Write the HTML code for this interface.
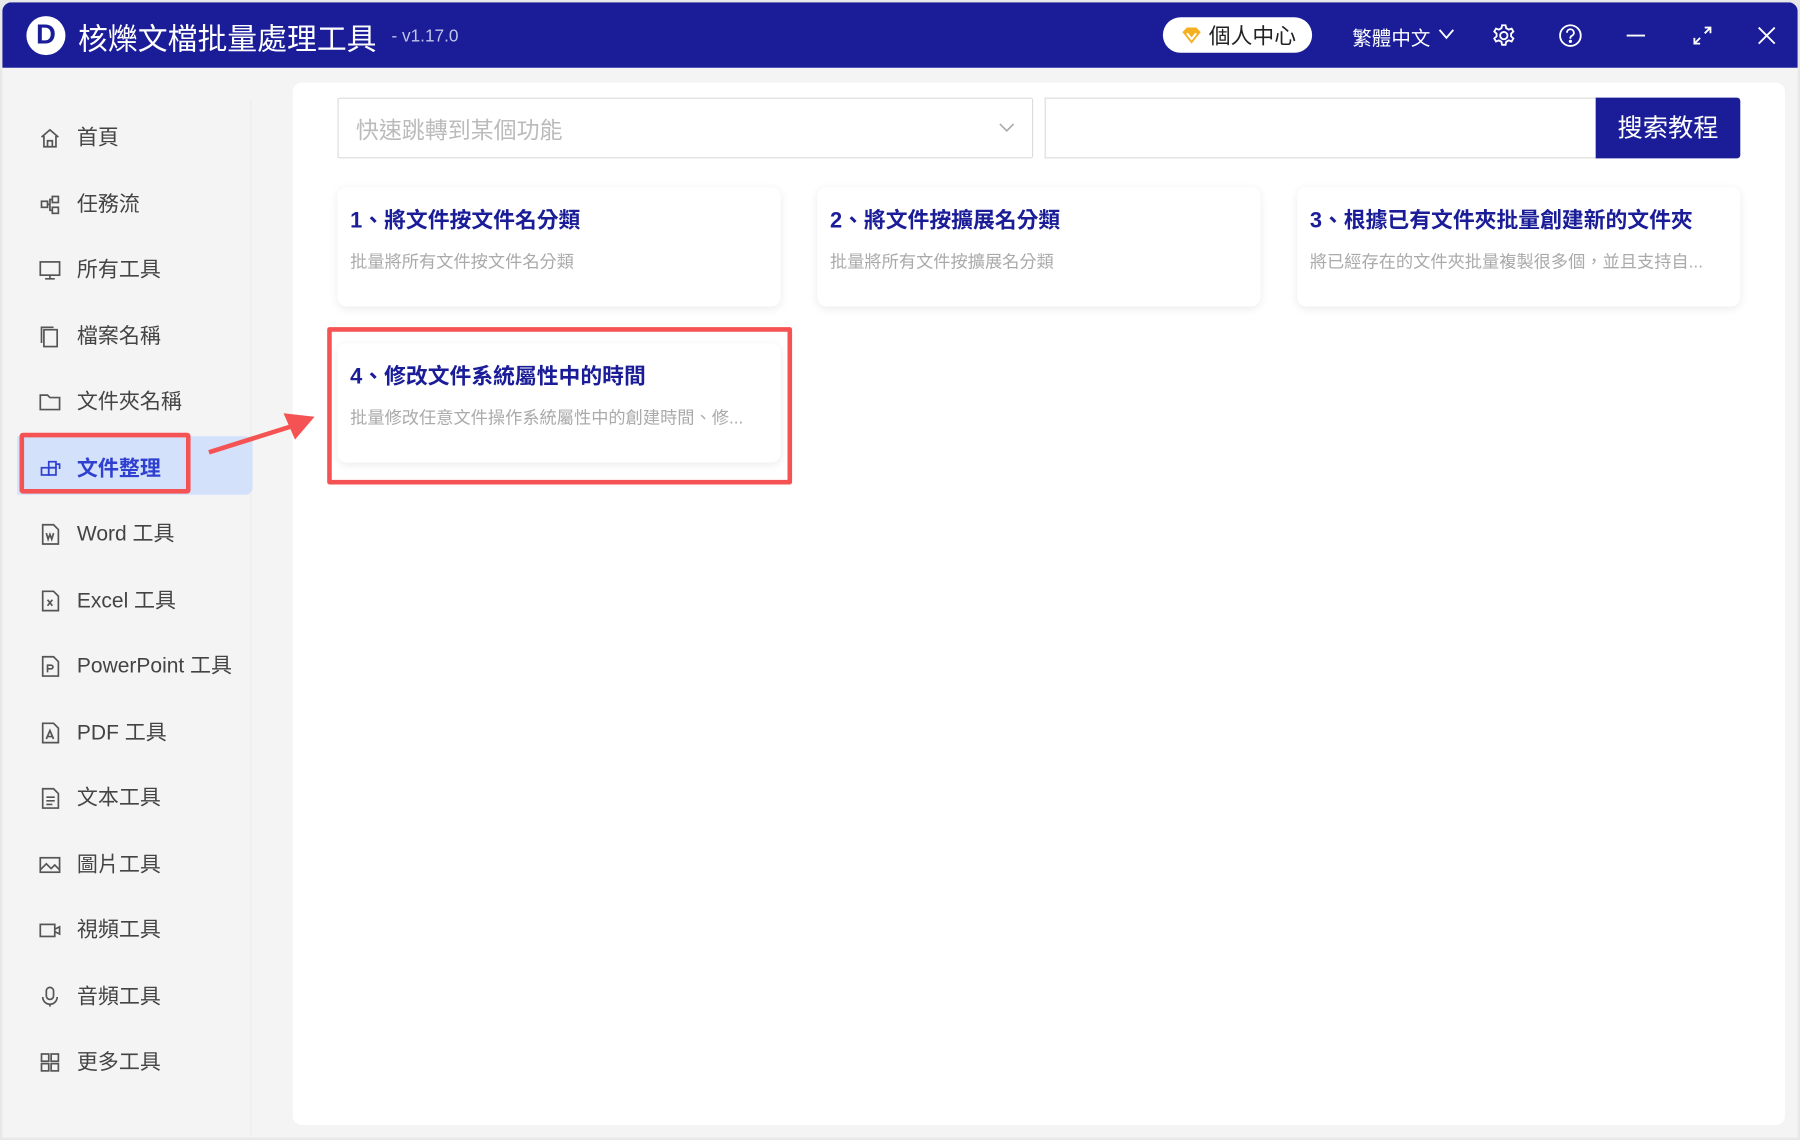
<!DOCTYPE html>
<html><head><meta charset="utf-8"><style>
*{box-sizing:border-box;margin:0;padding:0}
html,body{width:1800px;height:1140px;overflow:hidden;background:#e8e8e8}
#w{position:absolute;left:0;top:0;width:1568px;height:993px;transform:scale(1.14796);transform-origin:0 0;font-family:"Liberation Sans","Noto Sans CJK TC",sans-serif}
.win{position:absolute;left:2px;top:2px;width:1564px;height:989px;background:#f4f4f4;border-radius:8px 8px 0 0;overflow:hidden}
.bar{position:absolute;left:0;top:0;width:100%;height:57px;background:#1a1d97}
.abs{position:absolute}
.side{position:absolute;left:0;top:57px;width:218px;height:932px}
.item{position:absolute;left:31px;height:30px;font-size:18.3px;color:#444;line-height:30px;display:flex;align-items:center}
.item svg{width:21px;height:21px;margin-right:13px;stroke:#555;fill:none;stroke-width:1.4}
.panel{position:absolute;left:253px;top:70px;width:1300px;height:908px;background:#fff;border-radius:8px}
.card{position:absolute;width:386px;height:104px;background:#fff;border-radius:8px;box-shadow:0 2px 8px rgba(0,0,0,.08)}
.card h3{position:absolute;left:11px;top:14px;font-size:19px;color:#1a1d97;font-weight:bold;white-space:nowrap}
.card p{position:absolute;left:11px;top:54px;font-size:15px;color:#aaa;white-space:nowrap}
.ic{stroke:#fff;fill:none;stroke-width:1.6}
</style></head><body><div id="w">
<div class="win">
<div class="bar">
 <div class="abs" style="left:21px;top:12px;width:34px;height:34px;border-radius:50%;background:#fff;color:#1a1d97;font-weight:bold;font-size:24px;text-align:center;line-height:34px">D</div>
 <div class="abs" style="left:66px;top:12px;font-size:26px;color:#fff">核爍文檔批量處理工具</div>
 <div class="abs" style="left:339px;top:21px;font-size:15px;color:#c0c4ea">- v1.17.0</div>
 <div class="abs" style="left:1011px;top:13px;width:130px;height:31px;border-radius:16px;background:#fff"></div>
 <svg class="abs" style="left:1027px;top:21px" width="18" height="16" viewBox="0 0 18 16"><path d="M1 5 L5 1 H13 L17 5 L9 15 Z" fill="#f5b01f"/><path d="M5 6 L9 11 L13 6" stroke="#fff" stroke-width="1.8" fill="none"/></svg>
 <div class="abs" style="left:1051px;top:15px;font-size:19px;color:#222">個人中心</div>
 <div class="abs" style="left:1176px;top:17px;font-size:17px;color:#fff">繁體中文</div>
 <svg class="abs ic" style="left:1250px;top:20px" width="16" height="14"><path d="M2 4 L8 11 L14 4"/></svg>
 <svg class="abs ic" style="left:1297px;top:18px" width="22" height="22" viewBox="0 0 22 22"><circle cx="11" cy="11" r="3.2"/><path d="M9.5 2h3l.6 2.6 2.2 1.2 2.5-.9 1.5 2.6-2 1.8v2.4l2 1.8-1.5 2.6-2.5-.9-2.2 1.2-.6 2.6h-3l-.6-2.6-2.2-1.2-2.5.9-1.5-2.6 2-1.8V9.3l-2-1.8 1.5-2.6 2.5.9 2.2-1.2z"/></svg>
 <svg class="abs ic" style="left:1355px;top:18px" width="22" height="22" viewBox="0 0 22 22"><circle cx="11" cy="11" r="9"/><path d="M8 8.5a3 3 0 1 1 4 2.8c-.8.4-1 .9-1 1.7v.8"/><circle cx="11" cy="16" r=".6" fill="#fff"/></svg>
 <svg class="abs ic" style="left:1412px;top:18px" width="22" height="22"><path d="M3 11H19"/></svg>
 <svg class="abs ic" style="left:1470px;top:18px" width="22" height="22"><path d="M4 18L9 13M13 9L18 4M13 4H18V9M4 13V18H9"/></svg>
 <svg class="abs ic" style="left:1526px;top:18px" width="22" height="22"><path d="M4 4L18 18M18 4L4 18"/></svg>
</div>
<div class="side">
 <div class="abs" style="left:216px;top:28px;width:1px;height:904px;background:#ececec"></div>
 <div class="abs" style="left:13px;top:321px;width:205px;height:51px;background:#d3e1fb;border-radius:0 6px 6px 0"></div>
 <div class="abs" style="left:15px;top:318px;width:149px;height:53px;border:4px solid #f55353;border-radius:3px"></div>
</div>
<div class="item" style="top:103px"><svg viewBox="0 0 20 20"><path d="M3 9L10 3L17 9M5 8V17H15V8M8 17V12H12V17"/></svg>首頁</div>
<div class="item" style="top:161px"><svg viewBox="0 0 20 20"><rect x="3" y="7" width="5" height="5"/><rect x="12" y="3" width="5" height="5"/><rect x="12" y="12" width="5" height="5"/><path d="M8 9.5H10V5.5H12M10 9.5V14.5H12"/></svg>任務流</div>
<div class="item" style="top:218px"><svg viewBox="0 0 20 20"><rect x="2" y="3" width="16" height="11"/><path d="M10 14V17M6 17H14"/></svg>所有工具</div>
<div class="item" style="top:276px"><svg viewBox="0 0 20 20"><rect x="5" y="4" width="11" height="14"/><path d="M3 15V2H13"/></svg>檔案名稱</div>
<div class="item" style="top:333px"><svg viewBox="0 0 20 20"><path d="M2 4H8L10 6H18V16H2Z"/></svg>文件夾名稱</div>
<div class="item" style="top:391px;color:#2f3fcf;font-weight:bold"><svg viewBox="0 0 20 20" style="stroke:#2f3fcf"><rect x="3" y="9" width="6" height="6"/><rect x="9" y="9" width="6" height="6"/><rect x="9" y="4" width="6" height="5"/><path d="M15 6H18V10"/></svg>文件整理</div>
<div class="item" style="top:448px"><svg viewBox="0 0 20 20"><path d="M4 2H13L17 6V18H4Z"/><path d="M7 9L8.5 14L10 10L11.5 14L13 9"/></svg>Word 工具</div>
<div class="item" style="top:506px"><svg viewBox="0 0 20 20"><path d="M4 2H13L17 6V18H4Z"/><path d="M8 9L12 14M12 9L8 14"/></svg>Excel 工具</div>
<div class="item" style="top:563px"><svg viewBox="0 0 20 20"><path d="M4 2H13L17 6V18H4Z"/><path d="M8 15V9H11A1.5 1.5 0 0 1 11 12H8"/></svg>PowerPoint 工具</div>
<div class="item" style="top:621px"><svg viewBox="0 0 20 20"><path d="M4 2H13L17 6V18H4Z"/><path d="M7 15L10 8L13 15M8 13H12"/></svg>PDF 工具</div>
<div class="item" style="top:678px"><svg viewBox="0 0 20 20"><path d="M4 2H13L17 6V18H4Z"/><path d="M7 9H14M7 12H14M7 15H12"/></svg>文本工具</div>
<div class="item" style="top:736px"><svg viewBox="0 0 20 20"><rect x="2" y="4" width="16" height="12"/><path d="M2 14L7 9L11 13L14 10L18 14"/></svg>圖片工具</div>
<div class="item" style="top:793px"><svg viewBox="0 0 20 20"><rect x="2" y="5" width="12" height="10"/><path d="M14 9L18 7V13L14 11"/></svg>視頻工具</div>
<div class="item" style="top:851px"><svg viewBox="0 0 20 20"><rect x="7" y="2" width="6" height="10" rx="3"/><path d="M4 10A6 6 0 0 0 16 10M10 16V18"/></svg>音頻工具</div>
<div class="item" style="top:908px"><svg viewBox="0 0 20 20"><rect x="3" y="3" width="6" height="6"/><rect x="11" y="3" width="6" height="6"/><rect x="3" y="11" width="6" height="6"/><rect x="11" y="11" width="6" height="6"/></svg>更多工具</div>
<div class="panel">
 <div class="abs" style="left:39px;top:13px;width:606px;height:53px;border:1px solid #dcdcdc;border-radius:2px"></div>
 <div class="abs" style="left:55px;top:25px;font-size:20px;color:#bbb">快速跳轉到某個功能</div>
 <svg class="abs" style="left:614px;top:33px" width="16" height="12"><path d="M2 3L8 9L14 3" stroke="#aaa" fill="none" stroke-width="1.4"/></svg>
 <div class="abs" style="left:655px;top:13px;width:482px;height:53px;border:1px solid #dcdcdc;border-right:none"></div>
 <div class="abs" style="left:1135px;top:13px;width:126px;height:53px;background:#1a1d97;border-radius:0 3px 3px 0;color:#fff;font-size:22px;text-align:center;line-height:53px">搜索教程</div>
 <div class="card" style="left:39px;top:91px"><h3>1、將文件按文件名分類</h3><p>批量將所有文件按文件名分類</p></div>
 <div class="card" style="left:457px;top:91px"><h3>2、將文件按擴展名分類</h3><p>批量將所有文件按擴展名分類</p></div>
 <div class="card" style="left:875px;top:91px"><h3>3、根據已有文件夾批量創建新的文件夾</h3><p>將已經存在的文件夾批量複製很多個，並且支持自...</p></div>
 <div class="card" style="left:39px;top:227px"><h3>4、修改文件系統屬性中的時間</h3><p>批量修改任意文件操作系統屬性中的創建時間、修...</p></div>
 <div class="abs" style="left:30px;top:213px;width:405px;height:137px;border:4px solid #f55353;border-radius:2px"></div>
</div>
<svg class="abs" style="left:175px;top:355px" width="105" height="45"><path d="M5 37 L78 14" stroke="#f55353" stroke-width="4"/><path d="M97 6 L70 3 L80 26 Z" fill="#f55353"/></svg>
</div>
</div></body></html>
